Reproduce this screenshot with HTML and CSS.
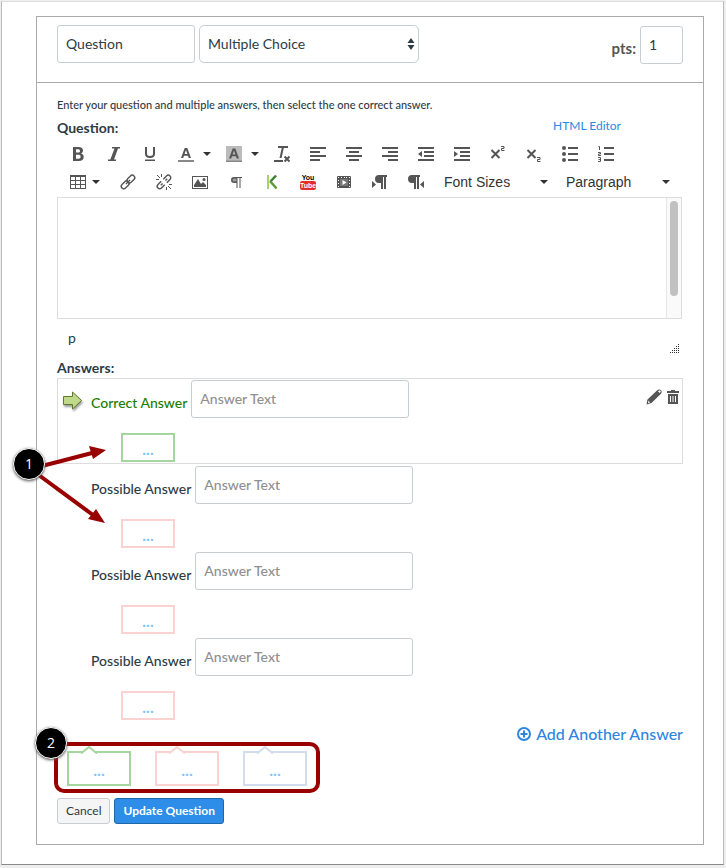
FILE: index.html
```html
<!DOCTYPE html>
<html lang="en">

<head>
    <meta charset="UTF-8">
    <meta name="viewport" content="width=device-width, initial-scale=1.0">
    <title>Edit Question</title>
    <link rel="stylesheet" href="styles.css">
</head>

<body>
    <div class="sheet">
        <form class="question-form">
            <div class="question-header">
                <input class="field name-field" type="text" value="Question" aria-label="Question name">
                <span class="select-wrap">
                    <select class="field type-field" aria-label="Question type">
                        <option>Multiple Choice</option>
                    </select>
                    <svg class="select-arrows" width="8" height="14" viewBox="0 0 8 14"><path d="M4 1l3.500 5h-7zM4 13l3.500-5h-7z"/></svg>
                </span>
                <div class="points">
                    <label for="points">pts:</label>
                    <input class="field points-field" id="points" type="text" value="1">
                </div>
            </div>

            <div class="question-body">
                <p class="instructions">Enter your question and multiple answers, then select the one correct answer.</p>
                <div class="title-row">
                    <label for="question-text">Question:</label>
                    <a class="html-link" href="#">HTML Editor</a>
                </div>

                <!-- Editor toolbar -->
                <div class="toolbar">
                    <div class="toolbar-row">
                        <button type="button" class="tool" aria-label="Bold"><svg viewBox="0 0 16 16"><path fill-rule="evenodd" d="M3 1h5.500c3 0 4.500 1.300 4.500 3.600 0 1.500-.8 2.500-2 3 1.700.4 2.700 1.600 2.700 3.300C13.700 13.500 12 15 8.800 15H3zM6 3.300v3.300h2c1.300 0 2-.6 2-1.700S9.300 3.300 8 3.300zM6 8.800v3.900h2.400c1.500 0 2.200-.7 2.200-2s-.8-1.900-2.200-1.900z"/></svg></button>
                        <button type="button" class="tool" aria-label="Italic"><svg viewBox="0 0 16 16"><path d="M6 1h8v1.500h-2L8 13.500h2V15H2v-1.500h2.300L8.500 2.500H6z"/></svg></button>
                        <button type="button" class="tool" aria-label="Underline"><svg viewBox="0 0 16 16"><path d="M3 1h2v6.500C5 9.300 6 10 8 10s3-.7 3-2.500V1h2v7c0 2.700-2 4-5 4s-5-1.300-5-4zM3 13.500h10V15H3z"/></svg></button>
                        <button type="button" class="tool has-caret" aria-label="Text color"><svg viewBox="0 0 16 16"><path fill-rule="evenodd" d="M6.700 2h2.600L13 12h-2.200l-.8-2.300H6L5.200 12H3zM8 4L6.600 8h2.800z"/><path class="light" d="M0 14h16v2H0z"/></svg><span class="caret"></span></button>
                        <button type="button" class="tool has-caret" aria-label="Background color"><svg viewBox="0 0 16 16"><path class="swatch" d="M0 0h16v16H0z"/><path fill-rule="evenodd" d="M6.700 2.500h2.600L13 12.500h-2.200l-.8-2.300H6l-.8 2.300H3zM8 4.500L6.600 8.500h2.800z"/><path class="light" d="M0 14.500h16V16H0z"/></svg><span class="caret"></span></button>
                        <button type="button" class="tool" aria-label="Clear formatting"><svg viewBox="0 0 16 16"><path d="M4 0h10v2H9.800L7.600 12H5.500L7.700 2H4zM0 14h9v2H0z"/><path class="line" d="M10.500 10.500l5 5m0-5l-5 5"/></svg></button>
                        <button type="button" class="tool" aria-label="Align left"><svg viewBox="0 0 16 16"><path d="M0 1h16v2H0zM0 5h10v2H0zM0 9h16v2H0zM0 13h10v2H0z"/></svg></button>
                        <button type="button" class="tool" aria-label="Align center"><svg viewBox="0 0 16 16"><path d="M0 1h16v2H0zM3 5h10v2H3zM0 9h16v2H0zM3 13h10v2H3z"/></svg></button>
                        <button type="button" class="tool" aria-label="Align right"><svg viewBox="0 0 16 16"><path d="M0 1h16v2H0zM6 5h10v2H6zM0 9h16v2H0zM6 13h10v2H6z"/></svg></button>
                        <button type="button" class="tool" aria-label="Outdent"><svg viewBox="0 0 16 16"><path d="M0 1h16v2H0zM6 5h10v2H6zM6 9h10v2H6zM0 13h16v2H0zM4 5v6L0 8z"/></svg></button>
                        <button type="button" class="tool" aria-label="Indent"><svg viewBox="0 0 16 16"><path d="M0 1h16v2H0zM6 5h10v2H6zM6 9h10v2H6zM0 13h16v2H0zM0 5v6l4-3z"/></svg></button>
                        <button type="button" class="tool" aria-label="Superscript"><svg viewBox="0 0 16 16"><path class="line" d="M1.500 4l8 8m0-8l-8 8"/><path class="thin" d="M11 .5h3v2h-2.500v2H14.500"/></svg></button>
                        <button type="button" class="tool" aria-label="Subscript"><svg viewBox="0 0 16 16"><path class="line" d="M1.500 4l8 8m0-8l-8 8"/><path class="thin" d="M11 11.500h3v2h-2.500v2H14.500"/></svg></button>
                        <button type="button" class="tool" aria-label="Bullet list"><svg viewBox="0 0 16 16"><circle cx="2" cy="2" r="2"/><circle cx="2" cy="8" r="2"/><circle cx="2" cy="14" r="2"/><path d="M6 1h10v2H6zM6 7h10v2H6zM6 13h10v2H6z"/></svg></button>
                        <button type="button" class="tool" aria-label="Numbered list"><svg viewBox="0 0 16 16"><path d="M6 1h10v2H6zM6 7h10v2H6zM6 13h10v2H6z"/><path class="thin" d="M.5.5h1v3.500M0 6.500h2.500v1.500h-2v1.500H3M0 11.500h2.500v4H0M.5 13.500h2"/></svg></button>
                    </div>
                    <div class="toolbar-row">
                        <button type="button" class="tool has-caret table-tool" aria-label="Table"><svg viewBox="0 0 16 16"><path fill-rule="evenodd" d="M0 1h16v14H0zM1 3v3h4V3zM6 3v3h4V3zM11 3v3h4V3zM1 7v3h4V7zM6 7v3h4V7zM11 7v3h4V7zM1 11v3h4v-3zM6 11v3h4v-3zM11 11v3h4v-3z"/></svg><span class="caret"></span></button>
                        <button type="button" class="tool" aria-label="Link"><svg viewBox="0 0 16 16"><g transform="rotate(-45 8 8)"><rect class="outline" x="-.5" y="5.500" width="9" height="5" rx="2.500"/><rect class="outline" x="7.500" y="5.500" width="9" height="5" rx="2.500"/><path class="outline" d="M5 8h6"/></g></svg></button>
                        <button type="button" class="tool" aria-label="Unlink"><svg viewBox="0 0 16 16"><g transform="rotate(-45 8 8)"><path class="outline" d="M6.500 5.500H2a2.500 2.500 0 0 0 0 5h4.500M9.500 5.500H14a2.500 2.500 0 0 1 0 5H9.500M3.500 8H6M10 8h2.500"/></g><path class="thin" d="M1 1l3 3M5.500 0v3M0 5.500h3M15 15l-3-3M10.500 16v-3M16 10.500h-3"/></svg></button>
                        <button type="button" class="tool" aria-label="Image"><svg viewBox="0 0 16 16"><path fill-rule="evenodd" d="M0 2h16v13H0zM1 3v11h14V3z"/><path d="M2 13v-2l4-6 3 5 2-2 3 3v2z"/><circle cx="12" cy="5.500" r="1.500"/></svg></button>
                        <button type="button" class="tool" aria-label="Paragraph marks"><svg viewBox="0 0 16 16"><path d="M6 3h8v1h-1.500v10h-1V4h-2v10h-1V9H6a3 3 0 0 1 0-6z"/><path class="hole" d="M6 4.500h2.500v3H6a1.500 1.500 0 0 1 0-3z"/></svg></button>
                        <button type="button" class="tool" aria-label="Khan Academy"><svg viewBox="0 0 16 16"><path fill="#a6d46a" d="M3 1h2v14H3z"/><path fill="none" stroke="#3c8030" stroke-width="2.500" d="M12 1.500L6.500 7.500"/><path fill="none" stroke="#5c9a3c" stroke-width="2.500" d="M6 7l6.500 7.500"/></svg></button>
                        <button type="button" class="tool" aria-label="YouTube"><span class="youtube"><span>You</span><span class="tube">Tube</span></span></button>
                        <button type="button" class="tool" aria-label="Media"><svg viewBox="0 0 16 16"><path fill-rule="evenodd" d="M2 2h12a1 1 0 0 1 1 1v10a1 1 0 0 1-1 1H2a1 1 0 0 1-1-1V3a1 1 0 0 1 1-1zM2 3v1h1V3zM2 6v1h1V6zM2 9v1h1V9zM2 12v1h1v-1zM13 3v1h1V3zM13 6v1h1V6zM13 9v1h1V9zM13 12v1h1v-1zM5 3v1h1V3zM8 3v1h1V3zM10 3v1h1V3z"/><path fill="#777" d="M4 5h8v7H4z"/><path fill="#fff" d="M6.500 6v5l4-2.500z"/></svg></button>
                        <button type="button" class="tool" aria-label="Left to right"><svg viewBox="0 0 16 16"><path d="M7 1h8v2h-1v12h-2V3h-1v12H9V9H7a4 4 0 0 1 0-8zM0 7v7l4-3.500z"/></svg></button>
                        <button type="button" class="tool" aria-label="Right to left"><svg viewBox="0 0 16 16"><path d="M4 1h8v2h-1v12H9V3H8v12H6V9H4a4 4 0 0 1 0-8zM16 7v7l-4-3.500z"/></svg></button>
                        <button type="button" class="tool-menu">Font Sizes<span class="caret"></span></button>
                        <button type="button" class="tool-menu">Paragraph<span class="caret"></span></button>
                    </div>
                </div>

                <div class="editor">
                    <textarea class="editor-text" id="question-text"></textarea>
                    <div class="scroll-track"><div class="scroll-thumb"></div></div>
                </div>
                <div class="status-bar">
                    <span>p</span>
                    <svg class="resize" width="10" height="10" viewBox="0 0 10 10"><path d="M9 0h1v1H9zM7 2h1v1H7zM9 2h1v1H9zM5 4h1v1H5zM7 4h1v1H7zM9 4h1v1H9zM3 6h1v1H3zM5 6h1v1H5zM7 6h1v1H7zM9 6h1v1H9zM1 8h1v1H1zM3 8h1v1H3zM5 8h1v1H5zM7 8h1v1H7zM9 8h1v1H9z"/></svg>
                </div>

                <!-- Answers -->
                <h2 class="answers-title">Answers:</h2>
                <div class="answer correct">
                    <div class="answer-line">
                        <svg class="arrow" width="22" height="20" viewBox="0 0 22 20"><path d="M.5 5.500H9.500V1L18.500 9.500L9.500 18V13.500H.5z"/></svg>
                        <label for="answer-1">Correct Answer</label>
                        <input class="field answer-field" id="answer-1" type="text" placeholder="Answer Text">
                        <div class="answer-actions">
                            <button type="button" class="icon-button" aria-label="Edit answer"><svg width="16" height="16" viewBox="0 0 16 16"><path fill-rule="evenodd" d="M.5 15.500l1-5L11 1.500C12.500 0 14 .3 15 1.300s1 2.500-.3 3.700L5.500 14zM12 2.200l1.700 1.700.8-.8c.4-.4.2-.9-.2-1.300s-.9-.6-1.300-.2zM2.500 11.500l-.5 2.700 2-.7z"/></svg></button>
                            <button type="button" class="icon-button" aria-label="Delete answer"><svg width="12" height="14" viewBox="0 0 12 14"><path fill-rule="evenodd" d="M4 0h4v1h4v2H0V1h4zM1 4h10v10H1zM3 6v6h1V6zM5.500 6v6h1V6zM8 6v6h1V6z"/></svg></button>
                        </div>
                    </div>
                    <button type="button" class="comment green">...</button>
                </div>
                <div class="answer">
                    <div class="answer-line">
                        <label for="answer-2">Possible Answer</label>
                        <input class="field answer-field" id="answer-2" type="text" placeholder="Answer Text">
                    </div>
                    <button type="button" class="comment pink">...</button>
                </div>
                <div class="answer">
                    <div class="answer-line">
                        <label for="answer-3">Possible Answer</label>
                        <input class="field answer-field" id="answer-3" type="text" placeholder="Answer Text">
                    </div>
                    <button type="button" class="comment pink">...</button>
                </div>
                <div class="answer">
                    <div class="answer-line">
                        <label for="answer-4">Possible Answer</label>
                        <input class="field answer-field" id="answer-4" type="text" placeholder="Answer Text">
                    </div>
                    <button type="button" class="comment pink">...</button>
                </div>

                <div class="add-row">
                    <a class="add-link" href="#"><svg width="14" height="14" viewBox="0 0 14 14"><circle cx="7" cy="7" r="6"/><path d="M7 3.500v7M3.500 7h7"/></svg>Add Another Answer</a>
                </div>

                <div class="feedback-row">
                    <button type="button" class="feedback green">...<svg class="notch" width="18" height="8" viewBox="0 0 18 8"><path d="M1 7.500L9 1l8 6.500"/></svg></button>
                    <button type="button" class="feedback pink">...<svg class="notch" width="18" height="8" viewBox="0 0 18 8"><path d="M1 7.500L9 1l8 6.500"/></svg></button>
                    <button type="button" class="feedback blue">...<svg class="notch" width="18" height="8" viewBox="0 0 18 8"><path d="M1 7.500L9 1l8 6.500"/></svg></button>
                    <div class="highlight"></div>
                    <span class="badge badge-two">2</span>
                </div>

                <div class="form-buttons">
                    <button type="button" class="button">Cancel</button>
                    <button type="submit" class="button primary">Update Question</button>
                </div>
            </div>
        </form>

        <!-- Callout arrows for step 1 -->
        <svg class="callout-arrows" width="80" height="100" viewBox="0 0 80 100">
            <path class="shaft" d="M10 27L64 13M8 33L65 75"/>
            <path d="M78 10L61 6l4 13zM77 83L68 69l-8 10z"/>
        </svg>
        <span class="badge badge-one">1</span>
    </div>
</body>
</html>
```

FILE: styles.css
```css
* {
    box-sizing: border-box;
}

body {
    margin: 0;
    background-color: #eee;
    color: #2d3b45;
    font-family: Lato, "Liberation Sans", sans-serif;
    font-size: 14px;
    line-height: 20px;
}

button,
input,
select,
textarea {
    font: inherit;
    color: inherit;
}

button {
    cursor: pointer;
}

a {
    color: #2d87e2;
    text-decoration: none;
}

.sheet {
    position: relative;
    margin: 1px 2px 3px 1px;
    padding: 14px 19px 19px 34px;
    background-color: #fff;
    border: 1px solid #bbb;
    border-top-color: #ddd;
    border-bottom-color: #888;
}

.question-form {
    border: 1px solid #aaa;
}

/* Form fields */
.field {
    height: 38px;
    padding: 0 8px 2px;
    background-color: #fff;
    border: 1px solid #c7cdd1;
    border-radius: 3px;
}

.field::placeholder {
    color: #909090;
    font-weight: 500;
    opacity: 1;
}

.question-header {
    display: flex;
    gap: 4px;
    padding: 8px 20px 18px;
    border-bottom: 1px solid #aaa;
}

.name-field {
    width: 138px;
}

.select-wrap {
    position: relative;
    width: 220px;
}

.type-field {
    width: 100%;
    padding-bottom: 0;
    appearance: none;
    border-radius: 5px;
}

.select-arrows {
    position: absolute;
    right: 4px;
    top: 12px;
    fill: #2d3b45;
    pointer-events: none;
}

.points {
    display: flex;
    align-items: center;
    gap: 4px;
    margin-left: auto;
    padding-top: 1px;
}

.points label {
    padding-top: 6px;
    color: #555;
    font-size: 15px;
    font-weight: bold;
}

.points-field {
    width: 43px;
}

.question-body {
    padding: 12px 20px 20px;
}

.instructions {
    margin: 0;
    font-size: 11px;
    font-weight: 500;
}

.title-row {
    display: flex;
    justify-content: space-between;
    padding-top: 3px;
    font-weight: bold;
}

.html-link {
    margin-right: 62px;
    font-size: 12px;
    font-weight: normal;
    line-height: 16px;
}

/* Toolbar */
.toolbar {
    padding: 2px 3px 1px;
}

.toolbar-row {
    display: flex;
    height: 28px;
}

.tool {
    display: flex;
    align-items: center;
    flex: none;
    width: 36px;
    padding: 0 10px;
    background: none;
    border: 0;
}

.tool svg {
    flex: none;
    width: 16px;
    height: 16px;
    overflow: visible;
    fill: #555;
}

.tool .light {
    fill: #888;
}

.tool .swatch {
    fill: #bbb;
}

.tool .hole {
    fill: #999;
}

.tool .line {
    fill: none;
    stroke: #555;
    stroke-width: 2;
}

.tool .thin,
.tool .outline {
    fill: none;
    stroke: #555;
    stroke-width: 1;
}

.tool .outline {
    stroke-width: 1.4;
}

.has-caret {
    gap: 9px;
    width: 48px;
}

.table-tool {
    gap: 6px;
    width: 50px;
}

.caret {
    flex: none;
    border: 4px solid transparent;
    border-top-color: #333;
    border-bottom: 0;
}

.tool-menu {
    display: flex;
    align-items: center;
    justify-content: space-between;
    width: 122px;
    padding: 0 8px 0 10px;
    background: none;
    border: 0;
    color: #333;
    font-family: "Liberation Sans", Arial, sans-serif;
}

.youtube {
    display: flex;
    flex-direction: column;
    align-items: center;
    width: 16px;
    color: #000;
    font-family: "Liberation Sans", Arial, sans-serif;
    font-size: 7px;
    font-weight: bold;
    line-height: 7px;
}

.tube {
    padding: 1px 0;
    background-color: #e52d27;
    border-radius: 2px;
    color: #fff;
}

/* Editor */
.editor {
    display: flex;
    height: 122px;
    margin-right: 1px;
    border: 1px solid #ddd;
}

.editor-text {
    flex: 1;
    padding: 8px;
    border: 0;
    resize: none;
}

.scroll-track {
    width: 15px;
    padding: 3px;
    background-color: #fafafa;
    border-left: 1px solid #e6e6e6;
}

.scroll-thumb {
    width: 8px;
    height: 95px;
    background-color: #c1c1c1;
    border-radius: 4px;
}

.status-bar {
    display: flex;
    justify-content: space-between;
    align-items: flex-end;
    height: 35px;
    padding: 0 4px 0 11px;
    line-height: 32px;
}

.resize {
    fill: #333;
}

/* Answers */
.answers-title {
    margin: 4px 0 0;
    font-size: 14px;
    line-height: 20px;
}

.answer {
    height: 86px;
    padding: 2px 1px 0 34px;
}

.answer.correct {
    padding: 1px 0 0 5px;
    border: 1px solid #ddd;
}

.answer-line {
    display: flex;
    align-items: center;
    gap: 4px;
}

.answer-line label {
    padding-top: 8px;
    font-weight: 500;
}

.answer-field {
    width: 218px;
}

.correct label {
    color: #1b7e00;
}

.arrow {
    margin: 4px 2px 0 0;
    fill: #bfd88a;
    stroke: #5f7a2b;
    stroke-width: 1;
    filter: drop-shadow(1px 2px 1px #999);
}

.answer-actions {
    display: flex;
    align-items: center;
    gap: 5px;
    margin: 0 3px 4px auto;
}

.icon-button {
    display: flex;
    padding: 0;
    background: none;
    border: 0;
    fill: #555;
}

.comment,
.feedback {
    display: block;
    background-color: #fff;
    border: 2px solid;
    color: #84c4f4;
    font-size: 16px;
    font-weight: bold;
    padding: 2px 0 0;
    line-height: 16px;
}

.comment {
    width: 54px;
    height: 29px;
    margin: 15px 0 0 30px;
}

.correct .comment {
    margin-left: 58px;
}

.green {
    border-color: #a5d6a0;
    stroke: #a5d6a0;
}

.pink {
    border-color: #fad2d2;
    stroke: #fad2d2;
}

.blue {
    border-color: #d2dcec;
    stroke: #d2dcec;
}

.add-row {
    display: flex;
    justify-content: flex-end;
    padding-top: 2px;
}

.add-link {
    display: flex;
    align-items: center;
    gap: 5px;
    font-size: 16px;
    font-weight: 500;
}

.add-link svg {
    fill: none;
    stroke: #2d87e2;
    stroke-width: 2;
}

/* Feedback comments */
.feedback-row {
    position: relative;
    display: flex;
    gap: 24px;
    padding: 7px 10px 12px;
}

.feedback {
    position: relative;
    width: 64px;
    height: 35px;
}

.notch {
    position: absolute;
    top: -7px;
    left: 11px;
    fill: #fff;
    stroke-width: 2;
}

.highlight {
    position: absolute;
    top: -2px;
    left: -3px;
    width: 266px;
    height: 51px;
    border: 4px solid #900;
    border-radius: 10px;
    pointer-events: none;
}

.form-buttons {
    display: flex;
    gap: 4px;
}

.button {
    height: 26px;
    padding: 0 8px;
    background-color: #f5f5f5;
    border: 1px solid #c7cdd1;
    border-radius: 3px;
    font-size: 12px;
}

.button.primary {
    background-color: #2d8de8;
    border-color: #1d68ab;
    color: #fff;
    font-weight: bold;
}

/* Numbered callouts */
.badge {
    position: absolute;
    width: 32px;
    height: 32px;
    background-color: #000;
    border: 1px solid #fff;
    border-radius: 50%;
    box-shadow: 0 1px 3px #555;
    color: #fff;
    font-family: "Open Sans", sans-serif;
    font-size: 14px;
    line-height: 29px;
    text-align: center;
}

.badge-one {
    top: 446px;
    left: 11px;
}

.badge-two {
    top: -17px;
    left: -22px;
}

.callout-arrows {
    position: absolute;
    top: 438px;
    left: 26px;
    fill: #900;
}

.callout-arrows .shaft {
    fill: none;
    stroke: #900;
    stroke-width: 4;
}
```
